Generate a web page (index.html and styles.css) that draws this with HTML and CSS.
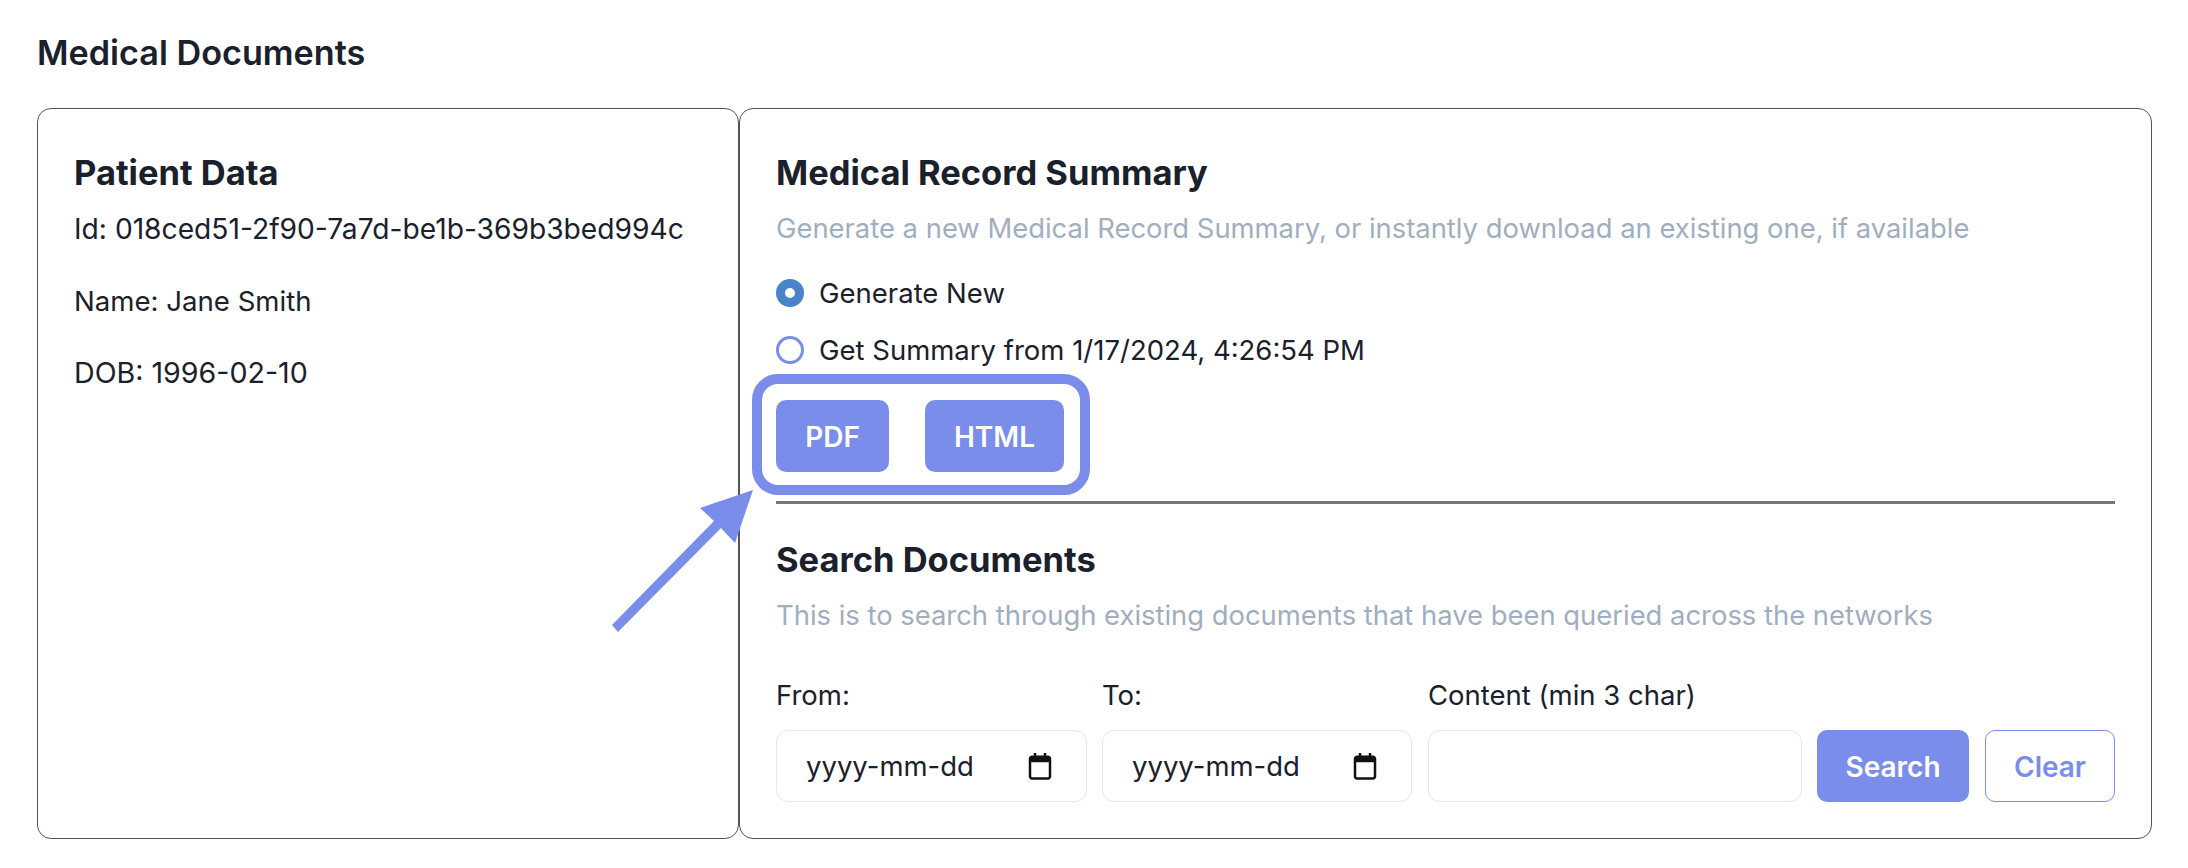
FILE: index.html
```html
<!DOCTYPE html>
<html lang="en">
<head>
    <meta charset="UTF-8">
    <meta name="viewport" content="width=device-width, initial-scale=1.0">
    <title>Medical Documents</title>
    <link rel="stylesheet" href="styles.css">
</head>
<body>
    <h1 class="page-title">Medical Documents</h1>

    <div class="panels">
        <!-- Patient data -->
        <section class="panel panel-patient">
            <h2 class="panel-heading">Patient Data</h2>
            <p class="patient-line">Id: 018ced51-2f90-7a7d-be1b-369b3bed994c</p>
            <p class="patient-line patient-name">Name: Jane Smith</p>
            <p class="patient-line patient-dob">DOB: 1996-02-10</p>
        </section>

        <section class="panel panel-main">
            <!-- Summary -->
            <h2 class="panel-heading">Medical Record Summary</h2>
            <p class="hint">Generate a new Medical Record Summary, or instantly download an existing one, if available</p>

            <div class="radio-row radio-first">
                <span class="radio radio-on"></span>
                <span>Generate New</span>
            </div>
            <div class="radio-row">
                <span class="radio"></span>
                <span>Get Summary from 1/17/2024, 4:26:54 PM</span>
            </div>

            <div class="download-row">
                <button class="btn btn-pdf">PDF</button>
                <button class="btn btn-html">HTML</button>
                <!-- Annotation on top of the screenshot -->
                <div class="callout"></div>
            </div>

            <hr class="divider">

            <!-- Search -->
            <h2 class="panel-heading">Search Documents</h2>
            <p class="hint">This is to search through existing documents that have been queried across the networks</p>

            <div class="search-row">
                <div class="field field-from">
                    <label class="field-label">From:</label>
                    <div class="input date-input">
                        <span>yyyy-mm-dd</span>
                        <svg class="cal-icon" viewBox="0 0 24 24" width="30" height="30"><path d="M7 1.500v2H5.600C4.200 3.500 3 4.700 3 6.100v14.300C3 21.800 4.200 23 5.600 23h12.800c1.400 0 2.600-1.200 2.600-2.600V6.100c0-1.400-1.200-2.600-2.600-2.600H17v-2h-2v2H9v-2H7zM5 9h14v11.400c0 .3-.3.600-.6.600H5.600c-.3 0-.6-.3-.6-.6V9z" fill="#111"/></svg>
                    </div>
                </div>
                <div class="field field-to">
                    <label class="field-label">To:</label>
                    <div class="input date-input">
                        <span>yyyy-mm-dd</span>
                        <svg class="cal-icon" viewBox="0 0 24 24" width="30" height="30"><path d="M7 1.500v2H5.600C4.200 3.500 3 4.700 3 6.100v14.300C3 21.800 4.200 23 5.600 23h12.800c1.400 0 2.600-1.200 2.600-2.600V6.100c0-1.400-1.200-2.600-2.600-2.600H17v-2h-2v2H9v-2H7zM5 9h14v11.400c0 .3-.3.600-.6.600H5.600c-.3 0-.6-.3-.6-.6V9z" fill="#111"/></svg>
                    </div>
                </div>
                <div class="field field-content">
                    <label class="field-label">Content (min 3 char)</label>
                    <div class="input"></div>
                </div>
                <button class="btn btn-search">Search</button>
                <button class="btn btn-clear">Clear</button>
            </div>
        </section>
    </div>

    <!-- Arrow pointing at the buttons -->
    <svg class="arrow" width="160" height="150" viewBox="0 0 160 150">
        <polygon points="153,0 135,53 121,38 18,142 12,135 114,31 100,18" fill="#7a8deb"/>
    </svg>
</body>
</html>
```

FILE: styles.css
```css
body {
    position: relative;
    margin: 0;
    padding: 0 36px 0 37px;
    font-family: Inter, "Noto Sans", sans-serif;
    font-size: 27.5px;
    line-height: 36px;
    color: #1a202c;
    background-color: #fff;
}

.page-title {
    margin: 0;
    padding-top: 35px;
    height: 108px;
    box-sizing: border-box;
    font-size: 34.2px;
    line-height: 36px;
    font-weight: 600;
}

.panels {
    display: flex;
    height: 731px;
}

.panel {
    box-sizing: border-box;
    border: 1px solid #4a5568;
    border-radius: 14px;
    padding: 36px;
}

.panel-patient {
    width: 702px;
    flex: none;
}

.panel-main {
    flex: 1;
    display: flex;
    flex-direction: column;
}

.panel-heading {
    margin: 0;
    font-size: 34.5px;
    line-height: 56px;
    font-weight: 700;
}

.patient-line {
    margin: 0 0 36px;
    font-size: 28.2px;
}

.patient-name {
    font-size: 27.6px;
}

.patient-dob {
    font-size: 28.6px;
}

.panel-patient .panel-heading {
    margin-bottom: 10px;
}

.hint {
    margin: 0;
    font-size: 27.4px;
    color: #a0aec0;
    padding-top: 9px;
}

/* Radio */
.radio-row {
    display: flex;
    align-items: center;
    gap: 15px;
    height: 36px;
    margin-top: 21px;
}

.radio-first {
    margin-top: 29px;
}

.radio {
    box-sizing: border-box;
    width: 28px;
    height: 28px;
    border: 3px solid #7a8deb;
    border-radius: 50%;
}

.radio-on {
    border: 9px solid #4a83c9;
    background-color: #fff;
}

/* Buttons */
.download-row {
    position: relative;
    display: flex;
    gap: 36px;
    margin-top: 32px;
}

.btn {
    box-sizing: border-box;
    height: 72px;
    border: none;
    border-radius: 10px;
    padding: 2px 0 0;
    font-family: inherit;
    font-size: 28px;
    font-weight: 600;
    color: #fff;
    background-color: #7a8deb;
}

.btn-pdf {
    width: 113px;
}

.btn-html {
    width: 139px;
}

.btn-search {
    width: 152px;
    margin-left: 15px;
}

.btn-clear {
    width: 130px;
    margin-left: 16px;
    color: #7a8deb;
    background-color: #fff;
    border: 1px solid #7a8deb;
}

.callout {
    position: absolute;
    left: -24px;
    top: -26px;
    width: 338px;
    height: 121px;
    box-sizing: border-box;
    border: 10px solid #7a8deb;
    border-radius: 26px;
}

.divider {
    margin: 29px 0 0;
    border: none;
    height: 3px;
    background-color: #74777f;
}

.divider + .panel-heading {
    margin-top: 28px;
}

/* Search */
.search-row {
    display: flex;
    align-items: flex-end;
    margin-top: 44px;
}

.field {
    display: flex;
    flex-direction: column;
}

.field-from {
    width: 311px;
    margin-right: 15px;
}

.field-to {
    width: 310px;
    margin-right: 16px;
}

.field-content {
    width: 374px;
}

.field-label {
    height: 36px;
    margin-bottom: 17px;
}

.input {
    box-sizing: border-box;
    height: 72px;
    border: 1px solid #e2e8f0;
    border-radius: 12px;
}

.date-input {
    display: flex;
    align-items: center;
    justify-content: space-between;
    padding: 0 31px 0 29px;
}

.cal-icon {
    flex: none;
}

/* Annotation arrow */
.arrow {
    position: absolute;
    left: 600px;
    top: 490px;
}
```
